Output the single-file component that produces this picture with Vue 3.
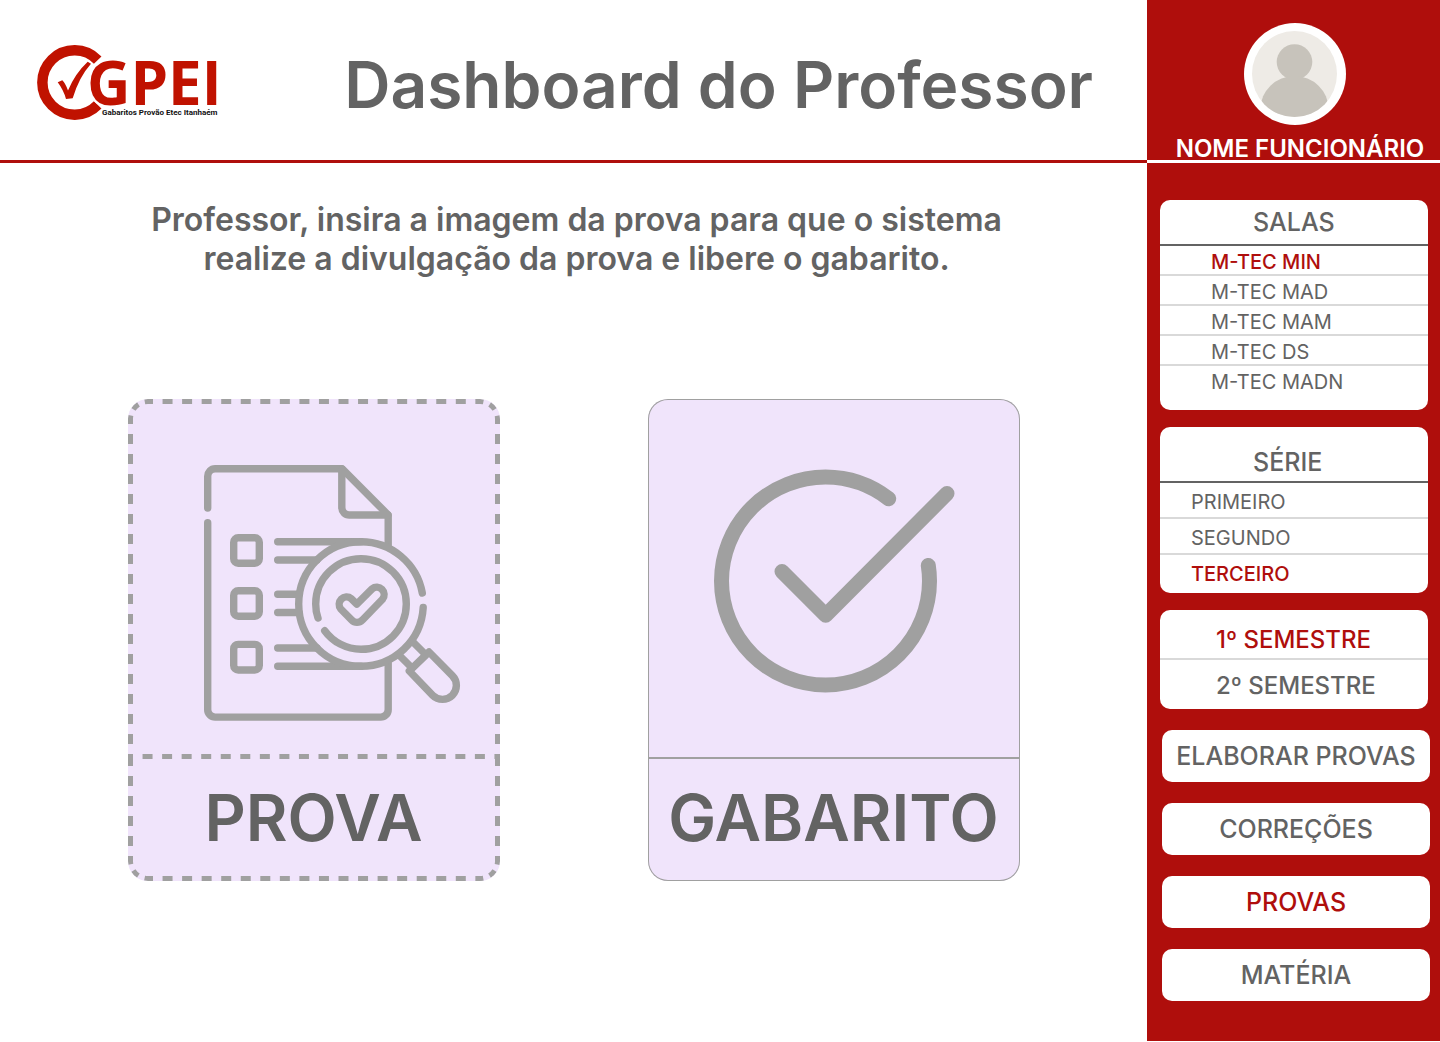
<script setup>
import { ref } from 'vue'

const rooms = ['M-TEC MIN', 'M-TEC MAD', 'M-TEC MAM', 'M-TEC DS', 'M-TEC MADN']
const grades = ['PRIMEIRO', 'SEGUNDO', 'TERCEIRO']
const terms = ['1º SEMESTRE', '2º SEMESTRE']
const pages = ['ELABORAR PROVAS', 'CORREÇÕES', 'PROVAS', 'MATÉRIA']

const room = ref('M-TEC MIN')
const grade = ref('TERCEIRO')
const term = ref('1º SEMESTRE')
const page = ref('PROVAS')
</script>

<template>
  <div class="layout">
    <div class="content">
      <header class="topbar">
        <svg class="logo" viewBox="37 45 186 76" role="img" aria-label="GPEI">
          <path class="ring" d="M97.700 60.100A32.200 32.200 0 1 0 97.700 104.900" />
          <path class="tick" d="M57.700 82.300L62.300 80.300Q65.500 83.500 68 90.500Q75 73.500 87.700 61.700L91 63.700Q79 77 72.700 98.300L66 99Q63.500 90 57.700 82.300Z" />
          <text class="brand" x="87" y="105">GPEI</text>
          <text class="tagline" x="102" y="115">Gabaritos Provão Etec Itanhaém</text>
        </svg>
        <h1>Dashboard do Professor</h1>
      </header>

      <main>
        <p class="intro">
          Professor, insira a imagem da prova para que o sistema realize a divulgação da prova e
          libere o gabarito.
        </p>
        <div class="cards">
          <button class="card upload" type="button">
            <svg class="frame" viewBox="0 0 372 482" aria-hidden="true">
              <g class="dash-h">
                <path d="M20 2.500H352" />
                <path d="M20 479.500H352" />
                <path d="M0 357.500H372" />
              </g>
              <g class="dash-v">
                <path d="M2.500 20V360" />
                <path d="M369.500 20V360" />
                <path d="M2.500 462V360" />
                <path d="M369.500 462V360" />
              </g>
              <g class="dash-c">
                <path d="M2.500 20A17.500 17.500 0 0 1 20 2.500" />
                <path d="M352 2.500A17.500 17.500 0 0 1 369.500 20" />
                <path d="M369.500 462A17.500 17.500 0 0 1 352 479.500" />
                <path d="M20 479.500A17.500 17.500 0 0 1 2.500 462" />
              </g>
            </svg>
            <svg class="art exam" viewBox="128 399 372 360" aria-hidden="true">
              <path d="M207.700 508V476.500a7.500 7.500 0 0 1 7.500-7.800H342L388.200 515V545" />
              <path d="M207.700 522.700V709.500a7.500 7.500 0 0 0 7.500 7.600H380.500a7.500 7.500 0 0 0 7.700-7.600V663" />
              <path d="M341.800 469V507.500a7.500 7.500 0 0 0 7.500 7.500H388" />
              <rect x="233.700" y="537.700" width="25.600" height="25.600" rx="4.500" />
              <rect x="233.700" y="590.700" width="25.600" height="25.600" rx="4.500" />
              <rect x="233.700" y="644.400" width="25.600" height="25.600" rx="4.500" />
              <path d="M277.700 541.700H361M277.700 560H317M277.700 594.300H299M277.700 612.500H299M277.700 648H317M277.700 666.300H361" />
              <path d="M423.200 607.500A62.300 62.300 0 0 1 361 666.300A62.300 62.300 0 0 1 298.700 604A62.300 62.300 0 0 1 361 541.700A62.300 62.300 0 0 1 422.300 593" />
              <path d="M324.700 630.700A45.300 45.300 0 0 0 361 649.300A45.300 45.300 0 0 0 406.300 604A45.300 45.300 0 0 0 361 558.700A45.300 45.300 0 0 0 315.700 604Q315.700 612 318 618" />
              <path d="M356.800 604.200L351.200 598.600A7.400 7.400 0 0 0 340.800 609L351.800 620.200A7.400 7.400 0 0 0 362.200 620.200L382.500 599.200A7.400 7.400 0 0 0 372.100 588.800Z" />
              <path d="M413.500 642.500L424 653M400.500 656.500L411 667" />
              <path d="M429 652L452.300 675.700A13.800 13.800 0 0 1 432.700 695.300L409.300 671Z" />
            </svg>
            <span class="label">PROVA</span>
          </button>

          <button class="card answers" type="button">
            <svg class="art done" viewBox="648 399 372 358" aria-hidden="true">
              <path d="M888.700 498.700A104.200 104.200 0 0 0 825.500 477A104.200 104.200 0 0 0 721.500 581A104.200 104.200 0 0 0 825.500 685A104.200 104.200 0 0 0 929.500 581Q929.500 573 928.300 565.500" />
              <path d="M782 571.500L825.700 615.300L947 493.500" />
            </svg>
            <span class="label">GABARITO</span>
          </button>
        </div>
      </main>
    </div>

    <aside class="sidebar">
      <div class="profile">
        <svg class="avatar" viewBox="0 0 102 102" aria-hidden="true">
          <clipPath id="face"><ellipse cx="50.500" cy="51" rx="42.500" ry="43" /></clipPath>
          <circle cx="51" cy="51" r="51" fill="#fff" />
          <g clip-path="url(#face)">
            <rect width="102" height="102" fill="#eeebe6" />
            <circle cx="50.500" cy="39" r="17.800" fill="#c7c3bb" />
            <ellipse cx="50.500" cy="86" rx="34" ry="33" fill="#c7c3bb" />
          </g>
        </svg>
        <span class="name">NOME FUNCIONÁRIO</span>
      </div>

      <div class="filters">
        <section class="panel rooms">
          <h2>SALAS</h2>
          <ul>
            <li v-for="r in rooms" :key="r">
              <button type="button" :class="{ active: r === room }" @click="room = r">{{ r }}</button>
            </li>
          </ul>
        </section>
        <section class="panel grades">
          <h2>SÉRIE</h2>
          <ul>
            <li v-for="g in grades" :key="g">
              <button type="button" :class="{ active: g === grade }" @click="grade = g">{{ g }}</button>
            </li>
          </ul>
        </section>
        <section class="panel terms">
          <ul>
            <li v-for="t in terms" :key="t">
              <button type="button" :class="{ active: t === term }" @click="term = t">{{ t }}</button>
            </li>
          </ul>
        </section>
      </div>

      <nav class="menu">
        <button
          v-for="p in pages"
          :key="p"
          type="button"
          :class="{ active: p === page }"
          @click="page = p"
        >{{ p }}</button>
      </nav>
    </aside>
  </div>
</template>

<style>
body {
  margin: 0;
  background: #fff;
}
</style>

<style scoped>
* {
  box-sizing: border-box;
}

.layout {
  display: grid;
  grid-template-columns: minmax(0, 1fr) 293px;
  font-family: Inter, "Liberation Sans", sans-serif;
  color: #636363;
}

button {
  margin: 0;
  padding: 0;
  border: 0;
  background: none;
  font: inherit;
  color: inherit;
  cursor: pointer;
}

h1,
h2,
p,
ul {
  margin: 0;
  padding: 0;
}

ul {
  list-style: none;
}

.topbar {
  display: flex;
  align-items: center;
  justify-content: space-between;
  height: 163px;
  padding: 6px 54px 0 37px;
  border-bottom: 3px solid #af0e0c;
}

.logo {
  width: 186px;
  height: 76px;
  overflow: visible;
}

.ring {
  fill: none;
  stroke: #c01200;
  stroke-width: 10.5;
}

.tick {
  fill: #c01200;
}

.brand {
  font: 700 60px "Open Sans", "Noto Sans", sans-serif;
  fill: #c01200;
  stroke: #fff;
  stroke-width: 4;
  paint-order: stroke;
}

.tagline {
  font: 700 8px Roboto, sans-serif;
  fill: #111;
}

h1 {
  padding-top: 4px;
  font-size: 64px;
  font-weight: 600;
  line-height: 78px;
}

main {
  display: flex;
  flex-direction: column;
  align-items: center;
  padding-top: 37px;
}

.intro {
  max-width: 900px;
  margin-left: 6px;
  font-size: 32px;
  font-weight: 600;
  line-height: 39px;
  text-align: center;
}

.cards {
  display: flex;
  gap: 148px;
  margin-top: 121px;
}

.card {
  position: relative;
  display: flex;
  flex-direction: column;
  width: 372px;
  border-radius: 20px;
  background: #f0e4fb;
  overflow: hidden;
}

.answers {
  box-shadow: inset 0 0 0 1px #a0a0a0;
}

.answers .art {
  border-bottom: 2px solid #a0a0a0;
}

.frame {
  position: absolute;
  inset: 0;
  fill: none;
  stroke: #a0a0a0;
  stroke-width: 5;
}

.dash-h {
  stroke-dasharray: 10 9.55;
  stroke-dashoffset: 5;
}

.dash-v {
  stroke-dasharray: 10 10;
  stroke-dashoffset: 5;
}

.dash-c {
  stroke-dasharray: 7 6.74;
  stroke-dashoffset: 3.5;
}

.art {
  width: 100%;
  height: 360px;
  fill: none;
  stroke: #a0a0a0;
  stroke-linecap: round;
  stroke-linejoin: round;
}

.exam {
  stroke-width: 7.4;
}

.done {
  stroke-width: 15;
}

.label {
  width: 100%;
  height: 122px;
  font-size: 64px;
  font-weight: 600;
  line-height: 117px;
  text-align: center;
}

.sidebar {
  padding-bottom: 40px;
  margin-bottom: 1px;
  background: #af0e0c;
}

.profile {
  display: flex;
  flex-direction: column;
  align-items: center;
  height: 163px;
  padding: 23px 0 0 2px;
  border-bottom: 3px solid #fff;
  color: #fff;
}

.avatar {
  flex: none;
  width: 102px;
  height: 102px;
}

.name {
  margin: 9px 0 0 11px;
  font-size: 24px;
  font-weight: 600;
  line-height: 30px;
  white-space: nowrap;
}

.filters {
  display: flex;
  flex-direction: column;
  gap: 17px;
  padding: 37px 12px 21px 13px;
}

.panel {
  border-radius: 10px;
  background: #fff;
}

.panel h2 {
  height: 46px;
  padding-left: 93px;
  border-bottom: 2px solid #636363;
  font-size: 25px;
  font-weight: 500;
  line-height: 44px;
}

.panel li {
  border-bottom: 2px solid #d9d9d9;
}

.panel li:last-child {
  border-bottom: 0;
}

.panel button {
  display: block;
  width: 100%;
  font-size: 20px;
  text-align: left;
}

.panel .active {
  color: #af0e0c;
  font-weight: 500;
}

.rooms {
  padding-bottom: 16px;
}

.rooms button {
  height: 28px;
  padding: 4px 0 0 51px;
  line-height: 24px;
}

.panel.grades h2 {
  height: 56px;
  padding-top: 13px;
}

.grades button {
  height: 34px;
  padding: 4px 0 0 31px;
  line-height: 30px;
}

.grades li:last-child {
  height: 38px;
}

.terms {
  padding: 5px 0;
}

.terms button {
  height: 43px;
  padding: 6px 0 0 56px;
  font-size: 24px;
  font-weight: 500;
  line-height: 37px;
}

.terms li:last-child {
  padding-top: 1px;
}

.menu {
  display: flex;
  flex-direction: column;
  gap: 21px;
  padding: 0 10px 0 15px;
}

.menu button {
  height: 52px;
  border-radius: 10px;
  background: #fff;
  font-size: 25px;
  font-weight: 500;
  line-height: 52px;
}

.menu .active {
  color: #af0e0c;
}
</style>
